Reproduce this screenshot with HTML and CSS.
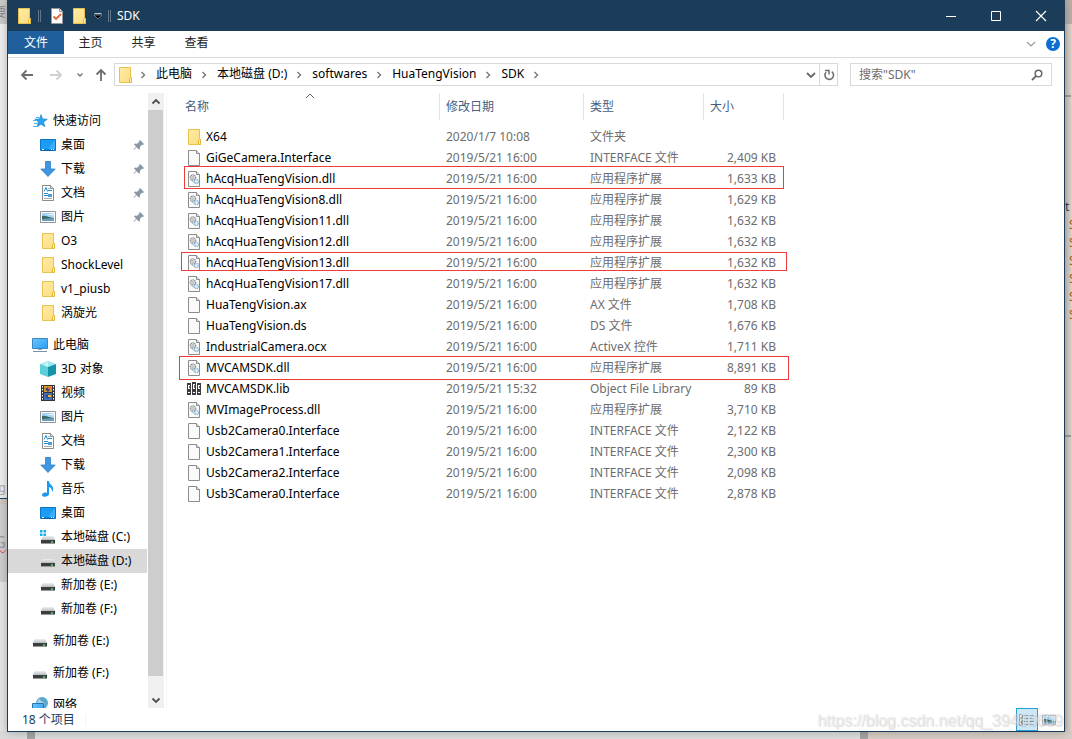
FILE: index.html
```html
<!DOCTYPE html>
<html lang="zh-CN">
<head>
<meta charset="utf-8">
<title>SDK</title>
<link rel="stylesheet" href="styles.css">
</head>
<body>
<svg class="defs" aria-hidden="true">
  <defs>
    <linearGradient id="gFolder" x1="0" y1="0" x2="1" y2="1"><stop offset="0" stop-color="#ffecaa"/><stop offset="1" stop-color="#fcdc7c"/></linearGradient>
    <linearGradient id="gScreen" x1="0" y1="0" x2="1" y2="1"><stop offset="0" stop-color="#6cc6ff"/><stop offset="1" stop-color="#2a9df4"/></linearGradient>
    <linearGradient id="gDrive" x1="0" y1="0" x2="0" y2="1"><stop offset="0" stop-color="#f0f0f0"/><stop offset="1" stop-color="#b9bcbf"/></linearGradient>
    <symbol id="folder" viewBox="0 0 16 16"><path d="M2.500.5h11v10h1v5h-12z" fill="url(#gFolder)" stroke="#e9c24c"/><path d="M12.500 15.500v-4l1-1h1v5z" fill="#fff0b8" stroke="#e2b838"/></symbol>
    <symbol id="file" viewBox="0 0 16 16"><path d="M2.500.5h8l3 3v12h-11z" fill="#fafafa" stroke="#8c8c8c"/><path d="M10.500.5v3h3" fill="#e4e4e4" stroke="#8c8c8c"/></symbol>
    <symbol id="dll" viewBox="0 0 16 16"><use href="#file"/><circle cx="7" cy="6.500" r="2.600" fill="#eee" stroke="#8b9197" stroke-width="1.400" stroke-dasharray="1.300 .6"/><circle cx="7" cy="6.500" r="1" fill="#fff" stroke="#9aa0a6" stroke-width=".8"/><path d="M4.500 8.500l5 4" stroke="#a5a9ae"/><circle cx="10.500" cy="10.500" r="2" fill="#e3f2fb" stroke="#7fb4d6" stroke-width="1.300" stroke-dasharray="1 .5"/></symbol>
    <symbol id="lib" viewBox="0 0 16 16"><path d="M1 2h4v12H1zM6 1h4v13H6zM11 2h4v12h-4z" fill="#3b3b40"/><path d="M2 4h2v4H2zM7 3h2v5H7zM12 4h2v4h-2z" fill="#fff"/><path d="M3 5h.8v2H3zM8 4h.8v3H8zM13 5h.8v2H13z" fill="#3b3b40"/><path d="M2 11h2v1H2zM7 11h2v1H7zM12 11h2v1h-2z" fill="#fff"/></symbol>
    <symbol id="desktop" viewBox="0 0 16 16"><path d="M.5 2.500h15v11H.5z" fill="#1a9cf5" stroke="#0878c6"/><path d="M1 13h14" stroke="#075e9f"/><path d="M8 12l7-9v9z" fill="#39adff"/><path d="M2 12.500h2M11 12.500h1M13 12.500h1" stroke="#fff"/></symbol>
    <symbol id="down" viewBox="0 0 16 16"><path d="M5.500.5h5v7.500h4.700L8 15.500.8 8h4.700z" fill="#3e97e2" stroke="#2f7dc4" stroke-width=".8"/></symbol>
    <symbol id="doc" viewBox="0 0 16 16"><path d="M2.500.5h8l3 3v12h-11z" fill="#fff" stroke="#8c8c8c"/><path d="M10.500.5v3h3" fill="#ddd" stroke="#8c8c8c"/><path d="M4 6.500l2-4 1.500 4M8.500 3.500h1M8 5.500h4M4 8.500h4M4 10.500h4" fill="none" stroke="#2389cf"/><path d="M4 13.500h8" stroke="#aaa"/><path d="M8 9h4v3H8z" fill="#46a0dd"/></symbol>
    <symbol id="pic" viewBox="0 0 16 16"><path d="M.5 2.500h15v11H.5z" fill="#fff" stroke="#8f9499"/><path d="M2 4h12v8H2z" fill="#a9d4f5"/><path d="M2 7c3-1 5 1 12 2v2H2z" fill="#3c6b62"/><path d="M2 10l12-1v3H2z" fill="#6d9dbb"/><path d="M6 5.500l8-1v2z" fill="#e3f2fc"/></symbol>
    <symbol id="star" viewBox="0 0 16 16"><path d="M9 1.500l1.600 4.400 4.700.3-3.700 2.900 1.300 4.600L9 11.200l-3.900 2.500 1.300-4.600-3.600-2.900 4.600-.3z" fill="#2aa3ef" stroke="#1380ca" stroke-width=".6"/><path d="M4 4.500h3M1 7.500h4M2 10.500h4M1 13.500h4" stroke="#4cb5f5"/></symbol>
    <symbol id="pc" viewBox="0 0 16 16"><path d="M.5 1.500h15v10H.5z" fill="url(#gScreen)" stroke="#3b88bd"/><path d="M6 12h4v1H6z" fill="#8aa5b8"/><path d="M1 14.500h14" stroke="#7793a7"/></symbol>
    <symbol id="cube" viewBox="0 0 16 16"><path d="M8 0l8 3-8 3-8-3z" fill="#9be8ef"/><path d="M0 3l8 3v10l-8-3z" fill="#5ccfdb"/><path d="M16 3L8 6v10l8-3z" fill="#1694a8"/><path d="M3 3l5-2v5z" fill="#c8f5f8"/></symbol>
    <symbol id="video" viewBox="0 0 16 16"><path d="M1 0h14v16H1z" fill="#34343a"/><path d="M4 1h8v6H4z" fill="#d79a28"/><path d="M4 8h8v7H4z" fill="#456fbd"/><path d="M5 4l3-2 2 3-2 2zM5 11l3-2 3 2-3 3z" fill="#2f488e"/><path d="M8 2h3v2H8z" fill="#ed6b32"/><path d="M8 10h3v2H8z" fill="#e8bd36"/><path d="M2.500 1v14M13.500 1v14" stroke="#fff" stroke-dasharray="1.500 1.500"/></symbol>
    <symbol id="music" viewBox="0 0 16 16"><path d="M7 0h2c0 4 5 4 4 9l-1 2c0-3-1-4-3-5v7c0 3-7 4-7 1 0-2 3-3 5-2z" fill="#1b98ef"/></symbol>
    <symbol id="drive" viewBox="0 0 16 16"><path d="M3 6h10l2 4H1z" fill="url(#gDrive)"/><path d="M1 10h14v4H1z" fill="#3b3d40"/><path d="M1 13.500h14" stroke="#999"/><path d="M11 12h2" stroke="#54e06b" stroke-width="1.300"/></symbol>
    <symbol id="winDrive" viewBox="0 0 16 16"><use href="#drive" y="1"/><path d="M0 1h2.500v2.500H0zM3.500 1H6v2.500H3.500zM0 4.500h2.500V7H0zM3.500 4.500H6V7H3.500z" fill="#14b0ea"/></symbol>
    <symbol id="net" viewBox="0 0 16 16"><circle cx="10" cy="6" r="6" fill="#5ba7cc"/><path d="M6 2c3 0 3 3 5 3s2 3 0 5-5 0-6-3z" fill="#a3d3e4"/><path d="M.5 6.500h11v8H.5z" fill="url(#gScreen)" stroke="#2377ae"/></symbol>
    <symbol id="pin" viewBox="0 0 12 12"><path d="M7 1l4 4-1 1-1-.3-2 2 0 2-1 1-2.400-2.400L1 11l-.5-.5 2.600-2.800L1 5.500l1-1 2.200.2 2-2L6 2z" fill="#8c99a5"/></symbol>
    <symbol id="chev" viewBox="0 0 8 8"><path d="M2.500 1l3 3-3 3" fill="none" stroke="#777" stroke-width="1.400"/></symbol>
  </defs>
</svg>

<div class="backdrop" aria-hidden="true">
  <div class="back-left">
    <span class="back-char top">要</span>
    <span class="back-char mid">g</span>
    <span class="back-char low">G</span>
  </div>
  <div class="back-right">
    <div class="back-code"><span class="first">t</span><span>S</span><span>S</span><span>S</span><span>S</span><span>S</span><span>S</span></div>
  </div>
  <div class="back-bottom"></div>
</div>

<div class="window">
  <header class="titlebar">
    <svg class="ico"><use href="#folder"/></svg>
    <span class="bar"></span>
    <button class="quick" aria-label="属性"><svg class="ico" viewBox="0 0 16 16"><path d="M2.500.5h8l3 3v12h-11z" fill="#fff" stroke="#999"/><path d="M10.500.5v3h3" fill="#ddd" stroke="#999"/><path d="M4.500 8.500l2.500 2.500 5-5" fill="none" stroke="#e8622c" stroke-width="1.800"/></svg></button>
    <button class="quick" aria-label="新建文件夹"><svg class="ico"><use href="#folder"/></svg></button>
    <button class="quick drop" aria-label="自定义快速访问工具栏"><svg viewBox="0 0 8 8"><path d="M.5 1.500h7" stroke="#b8c4ce"/><path d="M0 3h8L4 7z" fill="#000" stroke="#b8c4ce" stroke-width=".5"/></svg></button>
    <span class="bar"></span>
    <h1>SDK</h1>
    <div class="controls">
      <button aria-label="最小化"><svg viewBox="0 0 12 12"><path d="M1 6.500h10" stroke="#fff"/></svg></button>
      <button aria-label="最大化"><svg viewBox="0 0 12 12"><path d="M1.500 1.500h9v9h-9z" fill="none" stroke="#fff"/></svg></button>
      <button aria-label="关闭"><svg viewBox="0 0 12 12"><path d="M1 1l10 10M11 1L1 11" stroke="#fff" stroke-width="1.200"/></svg></button>
    </div>
  </header>

  <nav class="tabs">
    <button class="tab active">文件</button>
    <button class="tab">主页</button>
    <button class="tab">共享</button>
    <button class="tab">查看</button>
    <div class="tab-tools">
      <button aria-label="展开功能区"><svg viewBox="0 0 10 10"><path d="M1 3l4 4 4-4" fill="none" stroke="#999" stroke-width="1.200"/></svg></button>
      <button class="help" aria-label="帮助">?</button>
    </div>
  </nav>

  <div class="toolbar">
    <div class="history">
      <button aria-label="后退"><svg viewBox="0 0 14 14"><path d="M13 7H2M6.500 2.500L2 7l4.500 4.500" fill="none" stroke="#6e6e6e" stroke-width="1.800"/></svg></button>
      <button aria-label="前进"><svg viewBox="0 0 14 14"><path d="M1 7h11M7.500 2.500L12 7l-4.500 4.500" fill="none" stroke="#d0d0d0" stroke-width="1.800"/></svg></button>
      <button class="recent" aria-label="最近浏览的位置"><svg viewBox="0 0 8 8"><path d="M1.500 2.500L4 5l2.500-2.500" fill="none" stroke="#777" stroke-width="1.400"/></svg></button>
      <button aria-label="上移"><svg viewBox="0 0 14 14"><path d="M7 13V2M2.500 6.500L7 2l4.500 4.500" fill="none" stroke="#6e6e6e" stroke-width="1.800"/></svg></button>
    </div>
    <div class="address">
      <svg class="ico"><use href="#folder"/></svg>
      <svg class="chev"><use href="#chev"/></svg><a href="#">此电脑</a>
      <svg class="chev"><use href="#chev"/></svg><a href="#">本地磁盘 (D:)</a>
      <svg class="chev"><use href="#chev"/></svg><a href="#">softwares</a>
      <svg class="chev"><use href="#chev"/></svg><a href="#">HuaTengVision</a>
      <svg class="chev"><use href="#chev"/></svg><a href="#">SDK</a>
      <svg class="chev"><use href="#chev"/></svg>
      <button class="expand" aria-label="历史位置"><svg viewBox="0 0 10 10"><path d="M1 3l4 4 4-4" fill="none" stroke="#6a6a6a" stroke-width="1.800"/></svg></button>
      <button class="refresh" aria-label="刷新"><svg viewBox="0 0 12 12"><path d="M8.700 2.600A4.300 4.300 0 1 1 3 3.300" fill="none" stroke="#6e6e6e" stroke-width="1.600"/><path d="M2 1.500h4v4" fill="none" stroke="#6e6e6e" stroke-width="1.500"/></svg></button>
    </div>
    <div class="search">
      <input type="search" placeholder='搜索"SDK"' aria-label="搜索SDK">
      <svg viewBox="0 0 12 12"><circle cx="7.500" cy="4.500" r="3.300" fill="none" stroke="#666" stroke-width="1.500"/><path d="M5.200 6.800L1 11" stroke="#666" stroke-width="1.800"/></svg>
    </div>
  </div>

  <main class="body">
    <nav class="tree">
      <ul class="group">
        <li class="root"><a href="#"><svg class="ico"><use href="#star"/></svg>快速访问</a></li>
        <li><a href="#"><svg class="ico"><use href="#desktop"/></svg>桌面<svg class="pin"><use href="#pin"/></svg></a></li>
        <li><a href="#"><svg class="ico"><use href="#down"/></svg>下载<svg class="pin"><use href="#pin"/></svg></a></li>
        <li><a href="#"><svg class="ico"><use href="#doc"/></svg>文档<svg class="pin"><use href="#pin"/></svg></a></li>
        <li><a href="#"><svg class="ico"><use href="#pic"/></svg>图片<svg class="pin"><use href="#pin"/></svg></a></li>
        <li><a href="#"><svg class="ico"><use href="#folder"/></svg>O3</a></li>
        <li><a href="#"><svg class="ico"><use href="#folder"/></svg>ShockLevel</a></li>
        <li><a href="#"><svg class="ico"><use href="#folder"/></svg>v1_piusb</a></li>
        <li><a href="#"><svg class="ico"><use href="#folder"/></svg>涡旋光</a></li>
      </ul>
      <ul class="group">
        <li class="root"><a href="#"><svg class="ico"><use href="#pc"/></svg>此电脑</a></li>
        <li><a href="#"><svg class="ico"><use href="#cube"/></svg>3D 对象</a></li>
        <li><a href="#"><svg class="ico"><use href="#video"/></svg>视频</a></li>
        <li><a href="#"><svg class="ico"><use href="#pic"/></svg>图片</a></li>
        <li><a href="#"><svg class="ico"><use href="#doc"/></svg>文档</a></li>
        <li><a href="#"><svg class="ico"><use href="#down"/></svg>下载</a></li>
        <li><a href="#"><svg class="ico"><use href="#music"/></svg>音乐</a></li>
        <li><a href="#"><svg class="ico"><use href="#desktop"/></svg>桌面</a></li>
        <li><a href="#"><svg class="ico"><use href="#winDrive"/></svg>本地磁盘 (C:)</a></li>
        <li class="selected"><a href="#"><svg class="ico"><use href="#drive"/></svg>本地磁盘 (D:)</a></li>
        <li><a href="#"><svg class="ico"><use href="#drive"/></svg>新加卷 (E:)</a></li>
        <li><a href="#"><svg class="ico"><use href="#drive"/></svg>新加卷 (F:)</a></li>
      </ul>
      <ul class="group"><li class="root"><a href="#"><svg class="ico"><use href="#drive"/></svg>新加卷 (E:)</a></li></ul>
      <ul class="group"><li class="root"><a href="#"><svg class="ico"><use href="#drive"/></svg>新加卷 (F:)</a></li></ul>
      <ul class="group"><li class="root"><a href="#"><svg class="ico"><use href="#net"/></svg>网络</a></li></ul>
    </nav>
    <div class="scrollbar">
      <button aria-label="向上滚动"><svg viewBox="0 0 10 10"><path d="M1.500 6.500L5 3l3.500 3.500" fill="none" stroke="#505050" stroke-width="1.800"/></svg></button>
      <div class="track"><div class="thumb"></div></div>
      <button aria-label="向下滚动"><svg viewBox="0 0 10 10"><path d="M1.500 3.500L5 7l3.500-3.500" fill="none" stroke="#505050" stroke-width="1.800"/></svg></button>
    </div>
    <section class="files">
      <table>
        <colgroup><col class="c-name"><col class="c-date"><col class="c-type"><col class="c-size"></colgroup>
        <thead>
          <tr>
            <th><button>名称<svg class="sort" viewBox="0 0 10 6"><path d="M1 5l4-4 4 4" fill="none" stroke="#666"/></svg></button></th>
            <th><button>修改日期</button></th>
            <th><button>类型</button></th>
            <th><button>大小</button></th>
          </tr>
        </thead>
        <tbody>
          <tr><td><span class="name"><svg class="ico"><use href="#folder"/></svg>X64</span></td><td>2020/1/7 10:08</td><td>文件夹</td><td></td></tr>
          <tr><td><span class="name"><svg class="ico"><use href="#file"/></svg>GiGeCamera.Interface</span></td><td>2019/5/21 16:00</td><td>INTERFACE 文件</td><td>2,409 KB</td></tr>
          <tr class="mark mark-a"><td><span class="name"><svg class="ico"><use href="#dll"/></svg>hAcqHuaTengVision.dll</span></td><td>2019/5/21 16:00</td><td>应用程序扩展</td><td>1,633 KB</td></tr>
          <tr><td><span class="name"><svg class="ico"><use href="#dll"/></svg>hAcqHuaTengVision8.dll</span></td><td>2019/5/21 16:00</td><td>应用程序扩展</td><td>1,629 KB</td></tr>
          <tr><td><span class="name"><svg class="ico"><use href="#dll"/></svg>hAcqHuaTengVision11.dll</span></td><td>2019/5/21 16:00</td><td>应用程序扩展</td><td>1,632 KB</td></tr>
          <tr><td><span class="name"><svg class="ico"><use href="#dll"/></svg>hAcqHuaTengVision12.dll</span></td><td>2019/5/21 16:00</td><td>应用程序扩展</td><td>1,632 KB</td></tr>
          <tr class="mark mark-b"><td><span class="name"><svg class="ico"><use href="#dll"/></svg>hAcqHuaTengVision13.dll</span></td><td>2019/5/21 16:00</td><td>应用程序扩展</td><td>1,632 KB</td></tr>
          <tr><td><span class="name"><svg class="ico"><use href="#dll"/></svg>hAcqHuaTengVision17.dll</span></td><td>2019/5/21 16:00</td><td>应用程序扩展</td><td>1,632 KB</td></tr>
          <tr><td><span class="name"><svg class="ico"><use href="#file"/></svg>HuaTengVision.ax</span></td><td>2019/5/21 16:00</td><td>AX 文件</td><td>1,708 KB</td></tr>
          <tr><td><span class="name"><svg class="ico"><use href="#file"/></svg>HuaTengVision.ds</span></td><td>2019/5/21 16:00</td><td>DS 文件</td><td>1,676 KB</td></tr>
          <tr><td><span class="name"><svg class="ico"><use href="#dll"/></svg>IndustrialCamera.ocx</span></td><td>2019/5/21 16:00</td><td>ActiveX 控件</td><td>1,711 KB</td></tr>
          <tr class="mark mark-c"><td><span class="name"><svg class="ico"><use href="#dll"/></svg>MVCAMSDK.dll</span></td><td>2019/5/21 16:00</td><td>应用程序扩展</td><td>8,891 KB</td></tr>
          <tr><td><span class="name"><svg class="ico"><use href="#lib"/></svg>MVCAMSDK.lib</span></td><td>2019/5/21 15:32</td><td>Object File Library</td><td>89 KB</td></tr>
          <tr><td><span class="name"><svg class="ico"><use href="#dll"/></svg>MVImageProcess.dll</span></td><td>2019/5/21 16:00</td><td>应用程序扩展</td><td>3,710 KB</td></tr>
          <tr><td><span class="name"><svg class="ico"><use href="#file"/></svg>Usb2Camera0.Interface</span></td><td>2019/5/21 16:00</td><td>INTERFACE 文件</td><td>2,122 KB</td></tr>
          <tr><td><span class="name"><svg class="ico"><use href="#file"/></svg>Usb2Camera1.Interface</span></td><td>2019/5/21 16:00</td><td>INTERFACE 文件</td><td>2,300 KB</td></tr>
          <tr><td><span class="name"><svg class="ico"><use href="#file"/></svg>Usb2Camera2.Interface</span></td><td>2019/5/21 16:00</td><td>INTERFACE 文件</td><td>2,098 KB</td></tr>
          <tr><td><span class="name"><svg class="ico"><use href="#file"/></svg>Usb3Camera0.Interface</span></td><td>2019/5/21 16:00</td><td>INTERFACE 文件</td><td>2,878 KB</td></tr>
        </tbody>
      </table>
    </section>
  </main>

  <footer class="status">
    <span class="count">18 个项目</span>
    <div class="views">
      <button class="on" aria-label="详细信息"><svg viewBox="0 0 16 14"><path d="M.5 1.500h3v3h-3zM.5 5.500h3v3h-3zM.5 9.500h3v3h-3z" fill="#fff" stroke="#8a9aa5"/><path d="M5 2.500h4M10 2.500h5M5 5.500h4M10 5.500h5M5 8.500h4M10 8.500h5M5 11.500h4M10 11.500h5" stroke="#7f98a8"/><path d="M2 7h1M2 11h1" stroke="#c33"/></svg></button>
      <button aria-label="大缩略图"><svg viewBox="0 0 16 16"><use href="#pic"/></svg></button>
    </div>
  </footer>
</div>
<div class="watermark">https://blog.csdn.net/qq_39486609</div>
</body>
</html>
```
FILE: styles.css
```css
* { box-sizing: border-box; }

body {
  margin: 0;
  height: 100vh;
  overflow: hidden;
  position: relative;
  background: #ddd3ca;
  font: 12px/20px "Noto Sans", "Noto Sans CJK SC", sans-serif;
  color: #000;
}

button {
  margin: 0;
  padding: 0;
  border: 0;
  background: none;
  font: inherit;
  color: inherit;
  display: flex;
  align-items: center;
  justify-content: center;
}

a { color: inherit; text-decoration: none; }
ul { list-style: none; margin: 0; padding: 0; }
svg { flex: none; display: block; }
.defs { position: absolute; width: 0; height: 0; }
.ico { width: 16px; height: 16px; }

/* Windows lying behind the explorer */
.backdrop { position: absolute; inset: 0; overflow: hidden; }
.back-left {
  position: absolute;
  inset: 0 auto 0 0;
  width: 8px;
  background: linear-gradient(#c9c9c9 24px, #ececec 24px 498px, #1e4566 498px 499px, #cfc5bd 499px 504px, #cdcdcd 504px 582px, #e3e3e3 582px);
}
.back-right {
  position: absolute;
  inset: 0 0 0 auto;
  width: 8px;
  background:
    linear-gradient(#999, #999) 0 95px / 7px 2px no-repeat,
    linear-gradient(#999, #999) 0 435px / 7px 2px no-repeat,
    linear-gradient(#b9aea8 24px, transparent 24px),
    linear-gradient(90deg, #c5bab2, #dfd5cc);
}
.back-bottom {
  position: absolute;
  inset: auto 0 0 0;
  height: 8px;
  background: linear-gradient(90deg, #dadada 27px, #a3a3a3 27px 35px, #dcdcdc 35px 860px, #a3a3a3 860px 868px, #d6ccc3 868px);
}
.back-char { position: absolute; right: 2px; color: #aaa; }
.back-char.top { top: 3px; color: #888; }
.back-char.mid { top: 478px; }
.back-char.low { top: 532px; font-size: 16px; color: #999; text-decoration: underline wavy #e33 1px; }
.back-code { padding-top: 198px; line-height: 18px; color: #a5661a; }
.back-code span { display: block; padding-left: 5px; }
.back-code .first { padding-left: 1px; color: #345; }

.window {
  position: relative;
  height: calc(100vh - 7px);
  margin: 0 7px;
  border: solid #1c3d5a;
  border-width: 0 1px 1px;
  background: #fff;
  display: flex;
  flex-direction: column;
  box-shadow: 0 0 8px rgba(0, 0, 0, .25);
}

.titlebar {
  height: 31px;
  flex: none;
  display: flex;
  align-items: center;
  padding: 0 1px 0 8px;
  background: #1c3d5a;
  color: #fff;
}
.titlebar h1 { margin: 0 0 0 6px; font-size: 12px; font-weight: 400; }
.bar { width: 3px; height: 12px; margin: 0 8px 0 6px; border: solid #60768a; border-width: 0 1px; }
.quick { margin-right: 6px; }
.drop { margin: 0 6px 0 1px; }
.drop svg { width: 8px; height: 8px; }
.drop + .bar { margin: 0; }
.controls { margin-left: auto; display: flex; }
.controls button { width: 45px; height: 31px; }
.controls svg { width: 12px; height: 12px; }

.tabs {
  height: 27px;
  flex: none;
  display: flex;
  align-items: flex-start;
  border-bottom: 1px solid #dadbdc;
  color: #222;
}
.tab { width: 53px; height: 23px; }
.tab.active { width: 56px; background: #1f609c; color: #fff; }
.tab-tools { margin-left: auto; height: 26px; display: flex; align-items: center; gap: 10px; padding-right: 4px; }
.tab-tools svg { width: 10px; height: 10px; }
.help { width: 14px; height: 14px; border-radius: 50%; background: #0a6fd0; color: #fff; font-weight: 700; line-height: 14px; }

.toolbar { flex: none; display: flex; align-items: center; padding: 5px 12px 7px 0; }
.history { width: 106px; flex: none; display: flex; align-items: center; padding-left: 12px; gap: 15px; }
.history svg { width: 14px; height: 14px; }
.history .recent { margin: 0 -5px 0 -2px; }
.history .recent svg { width: 8px; height: 8px; }
.address {
  flex: 1;
  min-width: 0;
  height: 23px;
  display: flex;
  align-items: center;
  padding-left: 2px;
  border: 1px solid #d9d9d9;
  white-space: nowrap;
}
.address a { line-height: 18px; margin-bottom: 2px; }
.chev { width: 8px; height: 8px; margin: 0 9px 0 8px; }
.ico + .chev { margin-left: 6px; }
.expand { margin-left: auto; width: 16px; height: 21px; }
.refresh { width: 18px; height: 21px; border-left: 1px solid #d9d9d9; }
.expand svg { width: 10px; height: 10px; }
.refresh svg { width: 12px; height: 12px; }
.search {
  flex: 0 0 202px;
  min-width: 0;
  height: 23px;
  margin-left: 12px;
  display: flex;
  align-items: center;
  padding: 0 8px;
  border: 1px solid #d9d9d9;
}
.search input { flex: 1; min-width: 0; padding: 0; border: 0; outline: 0; background: none; font: inherit; }
.search input::placeholder { color: #6d6d6d; opacity: 1; }
.search svg { width: 12px; height: 12px; }

.body { flex: 1; min-height: 0; display: flex; }
.tree { width: 139px; flex: none; overflow: hidden; padding-top: 16px; }
.group { margin-bottom: 8px; }
.tree a { height: 24px; display: flex; align-items: center; gap: 5px; padding: 0 2px 0 32px; white-space: nowrap; }
.tree .root a { padding-left: 24px; }
.tree .selected { background: #d9d9d9; }
.pin { width: 12px; height: 12px; margin-left: auto; }
.scrollbar { width: 16px; flex: none; margin-left: 1px; display: flex; flex-direction: column; background: #f0f0f0; }
.scrollbar button { height: 17px; }
.scrollbar svg { width: 10px; height: 10px; }
.track { flex: 1; padding-bottom: 15px; }
.thumb { height: 100%; background: #cdcdcd; margin-right: 1px; }

.files { flex: 1; min-width: 0; margin-left: 2px; padding-left: 16px; border-left: 1px solid #f5f5f5; }
table { width: 601px; table-layout: fixed; border-collapse: collapse; }
.c-name { width: 257px; }
.c-date { width: 144px; }
.c-type { width: 120px; }
.c-size { width: 80px; }
th { padding: 0 0 6px; font-weight: 400; }
th button {
  position: relative;
  width: 100%;
  height: 27px;
  justify-content: flex-start;
  padding-left: 6px;
  border-right: 1px solid #e2e2e2;
  color: #44607f;
}
th:first-child button { padding-left: 2px; }
.sort { position: absolute; top: 0; left: 50%; width: 10px; height: 6px; margin-left: -6px; }
td { height: 21px; padding: 0 6px; line-height: 20px; color: #6d6d6d; white-space: nowrap; }
td:first-child { padding-left: 3px; color: #000; }
td:last-child { padding-right: 8px; text-align: right; }
.name { display: flex; align-items: center; gap: 4px; }

/* Red frames drawn round the files of interest */
.mark { position: relative; }
.mark td:first-child::after { content: ""; position: absolute; border: 1px solid #ef3b3b; }
.mark-a td:first-child::after { inset: -2px 0 0 1px; }
.mark-b td:first-child::after { inset: 0 -3px 2px -2px; }
.mark-c td:first-child::after { inset: -1px -5px -2px -4px; }

.status { height: 23px; flex: none; display: flex; align-items: center; padding-left: 14px; color: #1e395b; }
.count { padding-right: 10px; border-right: 1px solid #f2f2f2; line-height: 12px; }
.views { margin-left: auto; display: flex; padding-right: 4px; }
.views button { width: 22px; height: 23px; }
.views .on { border: 1px solid #26a0da; background: #cce8f6; }
.views svg { width: 16px; height: 14px; }

.watermark {
  position: absolute;
  right: 9px;
  bottom: 8px;
  font: 16px/20px "Liberation Sans", sans-serif;
  color: rgba(255, 255, 255, .6);
  text-shadow: 0 0 1px rgba(0, 0, 0, .15), 1px 1px 1px rgba(0, 0, 0, .12);
  pointer-events: none;
}
```
